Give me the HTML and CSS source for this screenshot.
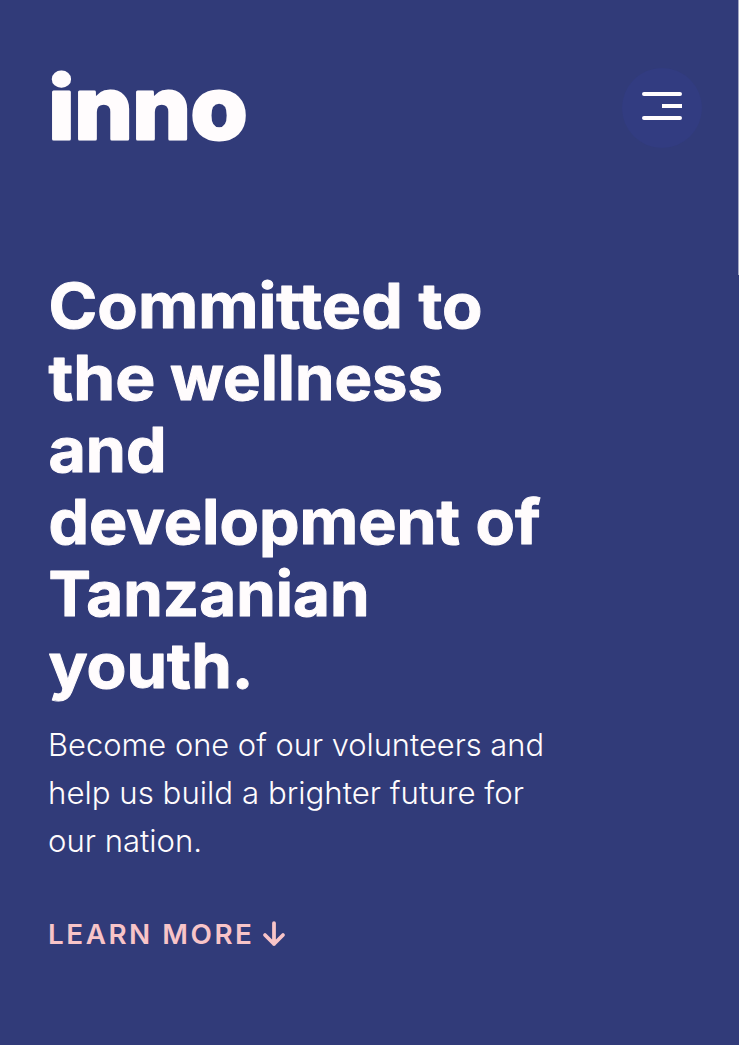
FILE: index.html
```html
<!DOCTYPE html>
<html lang="en">
<head>
<meta charset="utf-8">
<title>inno</title>
<link rel="stylesheet" href="styles.css">
</head>
<body>
<div class="page">
  <header class="header">
    <a class="logo" href="#"><svg width="200" height="86" viewBox="0 0 200 86"><text class="logo-text" x="0.5" y="75" textLength="199" lengthAdjust="spacingAndGlyphs">inno</text></svg></a>
    <button class="menu" aria-label="Menu"><svg width="40" height="28" viewBox="0 0 40 28"><path class="bar" d="M2 2H38M2 26H38"/><path class="bar-short" d="M20 14H40"/></svg></button>
  </header>
  <main class="hero">
    <h1 class="title">
      <svg class="lines" width="600" height="432">
        <text x="0.5" y="56" textLength="434" lengthAdjust="spacingAndGlyphs">Committed to</text>
        <text x="0.5" y="128" textLength="107" lengthAdjust="spacingAndGlyphs">the</text>
        <text x="122" y="128" textLength="273" lengthAdjust="spacingAndGlyphs">wellness</text>
        <text x="0.5" y="200" textLength="118" lengthAdjust="spacingAndGlyphs">and</text>
        <text x="0.5" y="272" textLength="492" lengthAdjust="spacingAndGlyphs">development of</text>
        <text x="0.5" y="344" textLength="321" lengthAdjust="spacingAndGlyphs">Tanzanian</text>
        <text x="0.5" y="416" textLength="205" lengthAdjust="spacingAndGlyphs">youth.</text>
      </svg>
    </h1>
    <p class="intro">
      <svg class="lines" width="600" height="144">
        <text x="0" y="34" textLength="496" lengthAdjust="spacingAndGlyphs">Become one of our volunteers and</text>
        <text x="0" y="82" textLength="476" lengthAdjust="spacingAndGlyphs">help us build a brighter future for</text>
        <text x="0" y="130" textLength="154" lengthAdjust="spacingAndGlyphs">our nation.</text>
      </svg>
    </p>
    <a class="more" href="#"><svg class="more-label" width="206" height="32"><text x="0" y="26" textLength="206.5" lengthAdjust="spacingAndGlyphs">LEARN MORE</text></svg><svg class="arrow" width="24" height="26" viewBox="0 0 24 26"><path d="M12 2V23M3 14L12 23L21 14"/></svg></a>
  </main>
  <div class="scrollbar"></div>
</div>
</body>
</html>
```
FILE: styles.css
```css
body { margin: 0; background: #313b79; color: #fffcfd; font-family: Inter, sans-serif; }
.page { position: relative; height: 1045px; box-sizing: border-box; padding: 64px 37px 0 48px; overflow: hidden; }
.header { display: flex; justify-content: space-between; height: 208px; }
svg { display: block; overflow: visible; }
text { fill: currentColor; }
.logo { color: inherit; }
.logo-text { font-size: 87px; font-weight: 800; stroke: currentColor; stroke-width: 3; stroke-linejoin: round; }
.menu { width: 80px; height: 80px; margin-top: 4px; padding: 0 0 4px; border: 0; border-radius: 50%; background: #323c81; display: flex; align-items: center; justify-content: center; }
.bar, .bar-short { stroke: #fffcfd; stroke-width: 4; }
.bar { stroke-linecap: round; }
.title { margin: 0; font-size: 62px; font-weight: 750; line-height: 72px; }
.title text { stroke: currentColor; stroke-width: 1; stroke-linejoin: round; }
.intro { margin: 18px 0 0; font-size: 31px; font-weight: 300; line-height: 48px; }
.more { display: flex; align-items: center; margin-top: 52px; color: #f8c4c8; text-decoration: none; font-weight: 600; }
.more-label text { font-size: 27.5px; letter-spacing: 2.5px; }
.arrow { margin-left: 8px; }
.arrow path { fill: none; stroke: currentColor; stroke-width: 3.75; stroke-linecap: round; stroke-linejoin: round; }
.scrollbar { position: absolute; top: 0; right: 0; width: 1px; height: 275px; background: #a3a7c2; }
```
